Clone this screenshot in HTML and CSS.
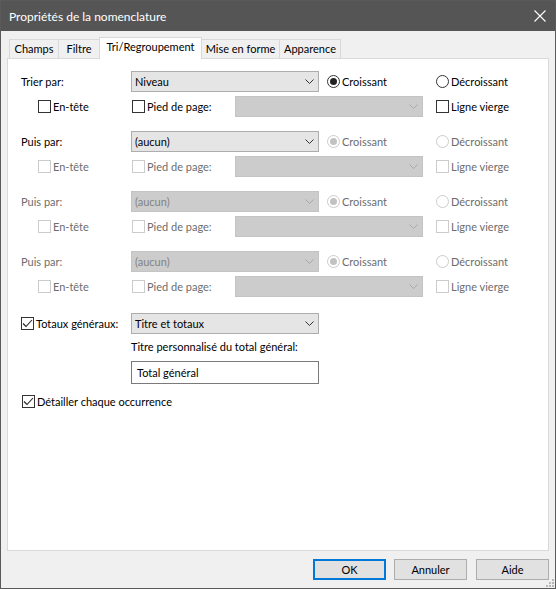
FILE: index.html
```html
<!DOCTYPE html>
<html lang="fr">
<head>
    <meta charset="UTF-8">
    <title>Propriétés de la nomenclature</title>
    <link rel="stylesheet" href="styles.css">
</head>
<body>
    <div class="window">
        <div class="titlebar">
            <span class="title">Propriétés de la nomenclature</span>
            <svg class="close" width="12" height="12" viewBox="0 0 12 12">
                <path d="M0.5 0.5 L11.5 11.5 M11.5 0.5 L0.5 11.5" stroke="#fff" stroke-width="1.1" fill="none"/>
            </svg>
        </div>
        <div class="content">
            <div class="tabs">
                <div class="tab w-champs">Champs</div>
                <div class="tab w-filtre">Filtre</div>
                <div class="tab w-tri selected">Tri/Regroupement</div>
                <div class="tab w-mise">Mise en forme</div>
                <div class="tab w-app">Apparence</div>
            </div>
            <div class="panel">

                <!-- Trier par -->
                <div class="group">
                    <div class="row">
                        <span class="label">Trier par:</span>
                        <div class="combo">
                            <span>Niveau</span>
                            <svg class="chev" width="9" height="5" viewBox="0 0 9 5"><path d="M0.5 0.5 L4.5 4.5 L8.5 0.5" fill="none" stroke="#333" stroke-width="1"/></svg>
                        </div>
                        <div class="opt asc"><span class="radio on"></span>Croissant</div>
                        <div class="opt"><span class="radio"></span>Décroissant</div>
                    </div>
                    <div class="row sub">
                        <div class="opt c-head"><span class="check"></span>En-tête</div>
                        <div class="opt c-foot"><span class="check"></span>Pied de page:</div>
                        <div class="combo off wide">
                            <span></span>
                            <svg class="chev" width="9" height="5" viewBox="0 0 9 5"><path d="M0.5 0.5 L4.5 4.5 L8.5 0.5" fill="none" stroke="#a8a8a8" stroke-width="1"/></svg>
                        </div>
                        <div class="opt blank"><span class="check"></span>Ligne vierge</div>
                    </div>
                </div>

                <!-- Puis par 1 -->
                <div class="group">
                    <div class="row">
                        <span class="label">Puis par:</span>
                        <div class="combo">
                            <span>(aucun)</span>
                            <svg class="chev" width="9" height="5" viewBox="0 0 9 5"><path d="M0.5 0.5 L4.5 4.5 L8.5 0.5" fill="none" stroke="#333" stroke-width="1"/></svg>
                        </div>
                        <div class="opt asc dis"><span class="radio on"></span>Croissant</div>
                        <div class="opt dis"><span class="radio"></span>Décroissant</div>
                    </div>
                    <div class="row sub">
                        <div class="opt c-head dis"><span class="check"></span>En-tête</div>
                        <div class="opt c-foot dis"><span class="check"></span>Pied de page:</div>
                        <div class="combo off wide">
                            <span></span>
                            <svg class="chev" width="9" height="5" viewBox="0 0 9 5"><path d="M0.5 0.5 L4.5 4.5 L8.5 0.5" fill="none" stroke="#a8a8a8" stroke-width="1"/></svg>
                        </div>
                        <div class="opt blank dis"><span class="check"></span>Ligne vierge</div>
                    </div>
                </div>

                <!-- Puis par 2 -->
                <div class="group">
                    <div class="row">
                        <span class="label dis">Puis par:</span>
                        <div class="combo off">
                            <span>(aucun)</span>
                            <svg class="chev" width="9" height="5" viewBox="0 0 9 5"><path d="M0.5 0.5 L4.5 4.5 L8.5 0.5" fill="none" stroke="#a8a8a8" stroke-width="1"/></svg>
                        </div>
                        <div class="opt asc dis"><span class="radio on"></span>Croissant</div>
                        <div class="opt dis"><span class="radio"></span>Décroissant</div>
                    </div>
                    <div class="row sub">
                        <div class="opt c-head dis"><span class="check"></span>En-tête</div>
                        <div class="opt c-foot dis"><span class="check"></span>Pied de page:</div>
                        <div class="combo off wide">
                            <span></span>
                            <svg class="chev" width="9" height="5" viewBox="0 0 9 5"><path d="M0.5 0.5 L4.5 4.5 L8.5 0.5" fill="none" stroke="#a8a8a8" stroke-width="1"/></svg>
                        </div>
                        <div class="opt blank dis"><span class="check"></span>Ligne vierge</div>
                    </div>
                </div>

                <!-- Puis par 3 -->
                <div class="group">
                    <div class="row">
                        <span class="label dis">Puis par:</span>
                        <div class="combo off">
                            <span>(aucun)</span>
                            <svg class="chev" width="9" height="5" viewBox="0 0 9 5"><path d="M0.5 0.5 L4.5 4.5 L8.5 0.5" fill="none" stroke="#a8a8a8" stroke-width="1"/></svg>
                        </div>
                        <div class="opt asc dis"><span class="radio on"></span>Croissant</div>
                        <div class="opt dis"><span class="radio"></span>Décroissant</div>
                    </div>
                    <div class="row sub">
                        <div class="opt c-head dis"><span class="check"></span>En-tête</div>
                        <div class="opt c-foot dis"><span class="check"></span>Pied de page:</div>
                        <div class="combo off wide">
                            <span></span>
                            <svg class="chev" width="9" height="5" viewBox="0 0 9 5"><path d="M0.5 0.5 L4.5 4.5 L8.5 0.5" fill="none" stroke="#a8a8a8" stroke-width="1"/></svg>
                        </div>
                        <div class="opt blank dis"><span class="check"></span>Ligne vierge</div>
                    </div>
                </div>

                <!-- Totaux -->
                <div class="totals">
                    <div class="row">
                        <div class="opt c-totals">
                            <span class="check"><svg width="11" height="11" viewBox="0 0 11 11"><path d="M1 5.5 L4 8.5 L10 2" fill="none" stroke="#222" stroke-width="1.1"/></svg></span>Totaux généraux:
                        </div>
                        <div class="combo">
                            <span>Titre et totaux</span>
                            <svg class="chev" width="9" height="5" viewBox="0 0 9 5"><path d="M0.5 0.5 L4.5 4.5 L8.5 0.5" fill="none" stroke="#333" stroke-width="1"/></svg>
                        </div>
                    </div>
                    <div class="custom">
                        <div class="caption">Titre personnalisé du total général:</div>
                        <div class="textbox">Total général</div>
                    </div>
                </div>

                <div class="opt detail">
                    <span class="check"><svg width="11" height="11" viewBox="0 0 11 11"><path d="M1 5.5 L4 8.5 L10 2" fill="none" stroke="#222" stroke-width="1.1"/></svg></span>Détailler chaque occurrence
                </div>
            </div>
            <div class="buttons">
                <button class="btn default">OK</button>
                <button class="btn">Annuler</button>
                <button class="btn last">Aide</button>
            </div>
            <svg class="grip" width="8" height="8" viewBox="0 0 8 8">
                <rect x="6" y="0" width="2" height="2" fill="#b8b8b8"/>
                <rect x="3" y="3" width="2" height="2" fill="#b8b8b8"/>
                <rect x="6" y="3" width="2" height="2" fill="#b8b8b8"/>
                <rect x="0" y="6" width="2" height="2" fill="#b8b8b8"/>
                <rect x="3" y="6" width="2" height="2" fill="#b8b8b8"/>
                <rect x="6" y="6" width="2" height="2" fill="#b8b8b8"/>
            </svg>
        </div>
    </div>
</body>
</html>
```

FILE: styles.css
```css
body {
    margin: 0;
    font-family: Lato, "Liberation Sans", sans-serif;
    font-size: 11px;
    color: #000;
}
.window {
    width: 556px;
    height: 589px;
    box-sizing: border-box;
    border: 1px solid #5a5a5a;
    background-color: #f0f0f0;
    display: flex;
    flex-direction: column;
    white-space: nowrap;
}
.titlebar {
    height: 30px;
    flex-shrink: 0;
    background-color: #555555;
    color: #fff;
    display: flex;
    align-items: center;
    justify-content: space-between;
    padding: 0 9px 0 8px;
}
.title {
    font-size: 12px;
}
.content {
    flex: 1;
    display: flex;
    flex-direction: column;
    padding: 6px 6px 8px 6px;
    position: relative;
}
.tabs {
    display: flex;
    align-items: flex-end;
    height: 21px;
    margin-left: 2px;
    position: relative;
    z-index: 1;
}
.tab {
    box-sizing: border-box;
    height: 19px;
    border: 1px solid #d9d9d9;
    border-bottom: none;
    background-color: #f0f0f0;
    margin-left: -1px;
    text-align: center;
    line-height: 17px;
}
.tab:first-child {
    margin-left: 0;
}
.tab.selected {
    height: 22px;
    margin-bottom: -1px;
    background-color: #fff;
    line-height: 18px;
}
.w-champs { width: 50px; }
.w-filtre { width: 42px; }
.w-tri { width: 103px; }
.w-mise { width: 79px; }
.w-app { width: 62px; }

.panel {
    flex: 1;
    background-color: #fff;
    border: 1px solid #d9d9d9;
    padding: 12px 0 0 13px;
}
.group {
    margin-bottom: 14px;
}
.row {
    display: flex;
    align-items: center;
    height: 21px;
}
.row.sub {
    margin-top: 4px;
    padding-left: 17px;
}
.label {
    width: 110px;
}
.dis {
    color: #6d6d6d;
}
.combo {
    box-sizing: border-box;
    width: 188px;
    height: 21px;
    border: 1px solid #adadad;
    background-color: #e5e5e5;
    display: flex;
    align-items: center;
    justify-content: space-between;
    padding: 0 4px 0 3px;
}
.combo.off {
    background-color: #cccccc;
    border-color: #c4c4c4;
    color: #838383;
}
.opt {
    display: flex;
    align-items: center;
}
.asc {
    width: 109px;
    margin-left: 8px;
}
.c-head {
    width: 94px;
}
.c-foot {
    width: 103px;
}
.blank {
    margin-left: 13px;
}
.radio {
    box-sizing: border-box;
    width: 13px;
    height: 13px;
    border: 1px solid #333;
    border-radius: 50%;
    background-color: #fff;
    margin-right: 2px;
    display: flex;
    align-items: center;
    justify-content: center;
}
.radio.on::after {
    content: "";
    width: 7px;
    height: 7px;
    border-radius: 50%;
    background-color: #222;
}
.dis .radio {
    border-color: #cccccc;
}
.dis .radio.on::after {
    background-color: #c2c2c2;
}
.check {
    box-sizing: border-box;
    width: 13px;
    height: 13px;
    border: 1px solid #333;
    background-color: #fff;
    margin-right: 2px;
    display: flex;
    align-items: center;
    justify-content: center;
}
.dis .check {
    border-color: #cccccc;
}

.totals {
    margin-top: 16px;
}
.c-totals {
    width: 110px;
}
.custom {
    margin-left: 110px;
}
.caption {
    margin-top: 6px;
    height: 16px;
}
.textbox {
    box-sizing: border-box;
    width: 188px;
    height: 23px;
    margin-top: 5px;
    border: 1px solid #7a7a7a;
    padding: 4px 5px;
}
.detail {
    margin-top: 11px;
    margin-left: 1px;
}

.buttons {
    display: flex;
    justify-content: flex-end;
    margin-top: 8px;
}
.btn {
    box-sizing: border-box;
    width: 73px;
    height: 21px;
    margin-left: 8px;
    border: 1px solid #adadad;
    background-color: #e1e1e1;
    font-family: inherit;
    font-size: 11px;
    color: #000;
    padding: 0;
}
.btn.default {
    border: 2px solid #0078d7;
}
.btn:first-child {
    margin-left: 0;
}
.btn.last {
    margin-left: 9px;
}
.grip {
    position: absolute;
    right: 1px;
    bottom: 1px;
}
```
